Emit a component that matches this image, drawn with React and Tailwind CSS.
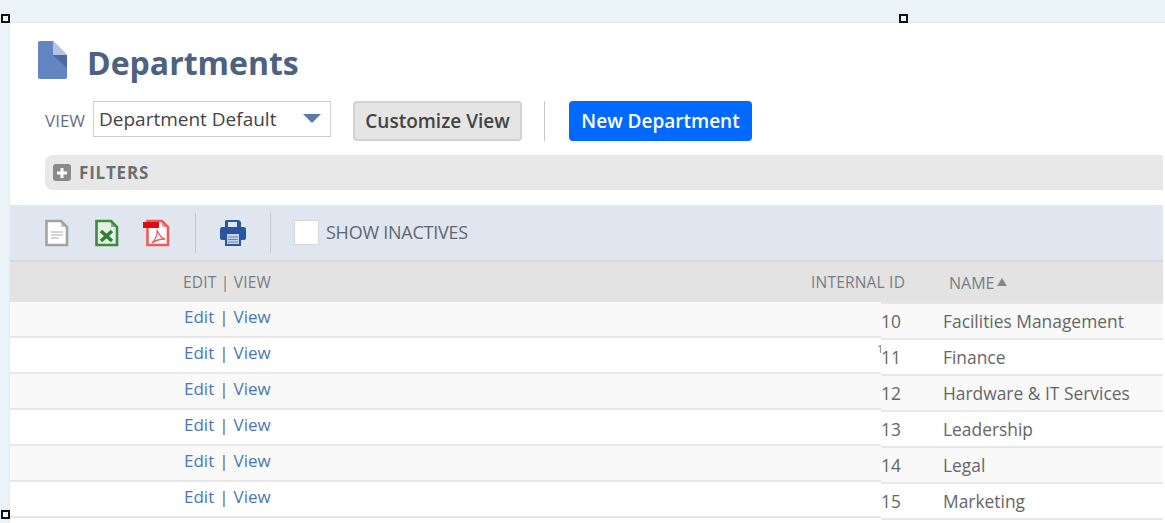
const rows = [
  ['10', 'Facilities Management'],
  ['11', 'Finance'],
  ['12', 'Hardware & IT Services'],
  ['13', 'Leadership'],
  ['14', 'Legal'],
  ['15', 'Marketing'],
]

function Handle({ className }) {
  return <div className={`absolute h-[9px] w-[9px] border-2 border-[#111] bg-white ${className}`}></div>
}

function PageIcon() {
  return (
    <svg width="30" height="38" viewBox="0 0 30 38">
      <path d="M2 0H15V38H2Q0 38 0 36V2Q0 0 2 0Z" fill="#6384c0" />
      <path d="M15 0L29 14V36Q29 38 27 38H15Z" fill="#6384c0" />
      <path d="M15 0L29 14H15Z" fill="#b4c3de" />
      <path d="M15 14H29V27Z" fill="#4d6ba3" />
    </svg>
  )
}

function FileIcon({ stroke, fill = '#fff', children }) {
  return (
    <svg width="26" height="28" viewBox="0 0 26 28">
      <path d="M2.5 2H17L23 8V26H2.5Z" fill={fill} stroke={stroke} strokeWidth="2.6" />
      <path d="M17 2V8H23Z" fill={stroke} opacity="0.6" />
      {children}
    </svg>
  )
}

function PrinterIcon() {
  return (
    <svg width="28" height="28" viewBox="0 0 28 28">
      <path d="M7 1H20L22 3V10H6V2Z" fill="#28569f" />
      <rect x="9" y="3" width="9" height="6" fill="#dfe6f0" />
      <path d="M3 8H25Q27 8 27 11V19Q27 21 25 21H3Q1 21 1 19V11Q1 8 3 8Z" fill="#28569f" />
      <rect x="6" y="14" width="16" height="13" fill="#28569f" />
      <rect x="8" y="15" width="12" height="10" fill="#c3d0e6" />
      <path d="M9 18H19M9 20.5H19M9 23H19" stroke="#6c88ba" />
    </svg>
  )
}

function App() {
  return (
    <div className="h-[523px] w-[1165px] overflow-hidden bg-white font-['Open_Sans',sans-serif]">
      <div className="relative flex h-full flex-col">
        <Handle className="left-[1px] top-[14px]" />
        <Handle className="left-[899px] top-[14px]" />
        <Handle className="left-[1px] top-[510px]" />
        <div className="h-[23px] shrink-0 border-b border-[#dfe8ea] bg-[#eaf4f8]"></div>
        <div className="flex min-h-0 flex-1">
          <div className="w-[10px] shrink-0 border-r border-[#e3ecef] bg-[#eaf4f8]"></div>
          <main className="w-[1153px] shrink-0">
            <div className="flex h-[78px] items-start pl-[28px] pt-[18px]">
              <PageIcon />
              <h1 className="ml-[19px] text-[32px] font-bold leading-[43px] text-[#4d6280]">Departments</h1>
            </div>
            <div className="flex h-[40px] items-start pl-[35px]">
              <span className="w-[48px] pt-[7px] text-[17px] leading-[26px] text-[#67707f]">VIEW</span>
              <div className="flex h-[36px] w-[238px] items-center justify-between border border-[#c9cdcf] pl-[5px] pr-[9px] text-[19px] text-[#444]">
                <span>Department Default</span>
                <span className="mb-[2px] h-0 w-0 border-x-[9px] border-t-[9px] border-x-transparent border-t-[#5b7aa8]"></span>
              </div>
              <button className="ml-[22px] h-[40px] w-[169px] rounded-[4px] border-2 border-[#d2d2d2] bg-[#e5e5e5] text-[19px] font-semibold text-[#444]">
                Customize View
              </button>
              <div className="ml-[22px] h-[40px] w-[1px] bg-[#c5c9c9]"></div>
              <button className="ml-[24px] h-[40px] w-[183px] rounded-[4px] bg-[#0069ff] text-[19px] font-semibold text-white">
                New Department
              </button>
            </div>
            <div className="ml-[35px] mt-[14px] flex h-[35px] items-center rounded-l-[8px] bg-[#e8e8e8] pl-[8px]">
              <span className="flex h-[17px] w-[18px] items-center justify-center rounded-[3px] bg-[#8a8a8a]">
                <svg width="12" height="12" viewBox="0 0 12 12">
                  <path d="M6 1V11M1 6H11" stroke="#fff" strokeWidth="3" />
                </svg>
              </span>
              <span className="ml-[8px] text-[17px] font-bold tracking-[0.8px] text-[#6b6f74]">FILTERS</span>
            </div>
            <div className="mt-[15px] flex h-[57px] items-center border-b-2 border-[#d5d8dc] bg-[#dfe6f0] pl-[34px]">
              <FileIcon stroke="#a3a3a3">
                <path d="M7 13H19M7 16H19M7 19H15" stroke="#c8c8c8" strokeWidth="1.5" />
              </FileIcon>
              <div className="ml-[24px]">
                <FileIcon stroke="#3f8a3f" fill="#e4f0e2">
                  <path d="M7 12L18 22M18 12L7 22" stroke="#2f7d32" strokeWidth="3.5" />
                </FileIcon>
              </div>
              <div className="relative ml-[25px]">
                <FileIcon stroke="#f05a5a">
                  <path d="M7 24C11 20 13 14 12 11C14 16 16 19 20 20C15 20 11 21 7 24Z" fill="none" stroke="#f05a5a" strokeWidth="1.3" />
                </FileIcon>
                <div className="absolute left-[-2px] top-[3px] h-[6px] w-[16px] bg-[#d80f16]"></div>
              </div>
              <div className="ml-[24px] h-[40px] w-[1px] bg-[#c4c9cf]"></div>
              <div className="ml-[23px]">
                <PrinterIcon />
              </div>
              <div className="ml-[23px] h-[40px] w-[1px] bg-[#c4c9cf]"></div>
              <span className="ml-[23px] h-[25px] w-[25px] border border-[#d6d8da] bg-white"></span>
              <span className="ml-[7px] text-[18px] tracking-[-0.25px] text-[#5f6670]">SHOW INACTIVES</span>
            </div>
            <div className="flex h-[40px] items-center bg-[#e3e3e3] pt-[1px] text-[15.5px] text-[#777d85]">
              <span className="ml-[173px] w-[628px] tracking-[0.2px]">EDIT | VIEW</span>
              <span className="w-[138px] tracking-[0.2px]">INTERNAL ID</span>
              <span className="flex items-center gap-[3px] text-[16px]">
                NAME
                <span className="mb-[2px] h-0 w-0 border-x-[5px] border-b-[8px] border-x-transparent border-b-[#888]"></span>
              </span>
            </div>
            <div className="flex">
              <div className="w-[871px] shrink-0">
                {rows.map((row, i) => (
                  <div
                    key={row[0]}
                    className={`flex h-[36px] items-center border-b-2 border-[#e7e7e7] pb-[4px] pl-[174px] text-[17px] text-[#4a76b8] ${i % 2 === 0 ? 'bg-[#f9f9f9]' : 'bg-white'}`}
                  >
                    Edit <span className="mx-[5px] text-[#666]">|</span> View
                  </div>
                ))}
              </div>
              <div className="relative min-w-0 flex-1">
                <span className="absolute left-[-4px] top-[41px] text-[11px] leading-[12px] text-[#8a7a55]">1</span>
                <div className="h-[2px] border-b-2 border-[#e7e7e7]"></div>
                {rows.map((row, i) => (
                  <div
                    key={row[0]}
                    className={`flex h-[36px] items-center border-b-2 border-[#e7e7e7] text-[17.4px] text-[#666] ${i % 2 === 0 ? 'bg-[#f9f9f9]' : 'bg-white'}`}
                  >
                    <span className="w-[62px] shrink-0 pr-[43px] text-right">{row[0]}</span>
                    <span>{row[1]}</span>
                  </div>
                ))}
              </div>
            </div>
          </main>
        </div>
      </div>
    </div>
  )
}

export default App
